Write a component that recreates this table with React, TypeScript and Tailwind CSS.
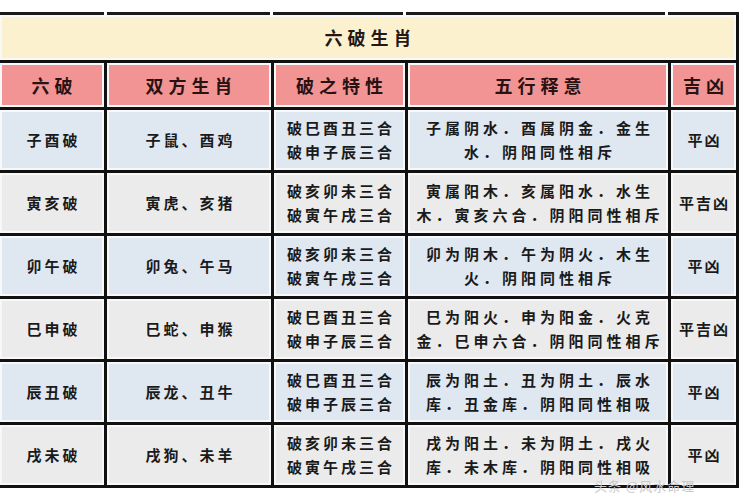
import React from 'react';

type Row = {
  name: string;
  pair: string;
  trait: [string, string];
  wuxing: [string, string];
  luck: string;
};

const rows: Row[] = [
  { name: '子酉破', pair: '子鼠、酉鸡', trait: ['破巳酉丑三合', '破申子辰三合'], wuxing: ['子属阴水．酉属阴金．金生', '水．阴阳同性相斥'], luck: '平凶' },
  { name: '寅亥破', pair: '寅虎、亥猪', trait: ['破亥卯未三合', '破寅午戌三合'], wuxing: ['寅属阳木．亥属阳水．水生', '木．寅亥六合．阴阳同性相斥'], luck: '平吉凶' },
  { name: '卯午破', pair: '卯兔、午马', trait: ['破亥卯未三合', '破寅午戌三合'], wuxing: ['卯为阴木．午为阴火．木生', '火．阴阳同性相斥'], luck: '平凶' },
  { name: '巳申破', pair: '巳蛇、申猴', trait: ['破巳酉丑三合', '破申子辰三合'], wuxing: ['巳为阳火．申为阳金．火克', '金．巳申六合．阴阳同性相斥'], luck: '平吉凶' },
  { name: '辰丑破', pair: '辰龙、丑牛', trait: ['破巳酉丑三合', '破申子辰三合'], wuxing: ['辰为阳土．丑为阴土．辰水', '库．丑金库．阴阳同性相吸'], luck: '平凶' },
  { name: '戌未破', pair: '戌狗、未羊', trait: ['破亥卯未三合', '破寅午戌三合'], wuxing: ['戌为阳土．未为阴土．戌火', '库．未木库．阴阳同性相吸'], luck: '平凶' },
];

const font = { fontFamily: '"Noto Sans CJK SC", "Noto Sans", sans-serif' };

const Cell: React.FC<{ bg: string; className?: string; children: React.ReactNode }> = ({ bg, className = '', children }) => (
  <div className={`border-2 border-[#f8f8f8] flex flex-col items-center justify-center text-center ${bg} ${className}`}>
    {children}
  </div>
);

export default function App() {
  return (
    <div className="relative w-[750px] h-[500px] bg-white overflow-hidden" style={font}>
      {/* leftover border of the row above */}
      <div className="flex gap-[3px] pt-[12px] w-[739px]">
        <div className="w-[104px] h-[3px] bg-[#1a1a1a]" />
        <div className="w-[164px] h-[3px] bg-[#1a1a1a]" />
        <div className="w-[131px] h-[3px] bg-[#1a1a1a]" />
        <div className="w-[260px] h-[3px] bg-[#1a1a1a]" />
        <div className="w-[71px] h-[3px] bg-[#1a1a1a]" />
      </div>

      <div className="grid w-[739px] grid-cols-[104px_164px_131px_260px_65px] grid-rows-[45px_44px_repeat(6,60px)] gap-[3px] bg-[#111] pr-[3px] pb-[3px]">
        <Cell bg="bg-[#fcf1cf]" className="col-span-5">
          <span className="text-[18px] font-bold tracking-[5px] pl-[5px] text-[#231815]">六破生肖</span>
        </Cell>

        {['六破', '双方生肖', '破之特性', '五行释意', '吉凶'].map(h => (
          <Cell key={h} bg="bg-[#f29494]">
            <span className="text-[18px] font-bold tracking-[5px] pl-[5px] text-[#2a1212]">{h}</span>
          </Cell>
        ))}

        {rows.map((r, i) => {
          const bg = i % 2 === 0 ? 'bg-[#dfe7f1]' : 'bg-[#ebebeb]';
          return (
            <React.Fragment key={r.name}>
              <Cell bg={bg}>
                <span className="text-[15px] font-bold tracking-[3px] pl-[3px] text-[#1a1a1a]">{r.name}</span>
              </Cell>
              <Cell bg={bg}>
                <span className="text-[15px] font-bold tracking-[3px] pl-[3px] text-[#1a1a1a]">{r.pair}</span>
              </Cell>
              <Cell bg={bg}>
                {r.trait.map(t => (
                  <span key={t} className="text-[15px] leading-[24px] font-bold tracking-[3px] pl-[3px] text-[#1a1a1a]">{t}</span>
                ))}
              </Cell>
              <Cell bg={bg}>
                {r.wuxing.map(t => (
                  <span key={t} className="text-[15px] leading-[24px] font-bold tracking-[4px] pl-[4px] whitespace-nowrap text-[#1a1a1a]">{t}</span>
                ))}
              </Cell>
              <Cell bg={bg}>
                <span className="text-[15px] font-bold tracking-[2px] pl-[2px] text-[#1a1a1a]">{r.luck}</span>
              </Cell>
            </React.Fragment>
          );
        })}
      </div>

      <div className="absolute left-[594px] top-[478px] text-[13px] leading-[16px] tracking-[1px] text-[#c9c9c9] whitespace-nowrap">
        头条 @风水命理
      </div>
    </div>
  );
}
